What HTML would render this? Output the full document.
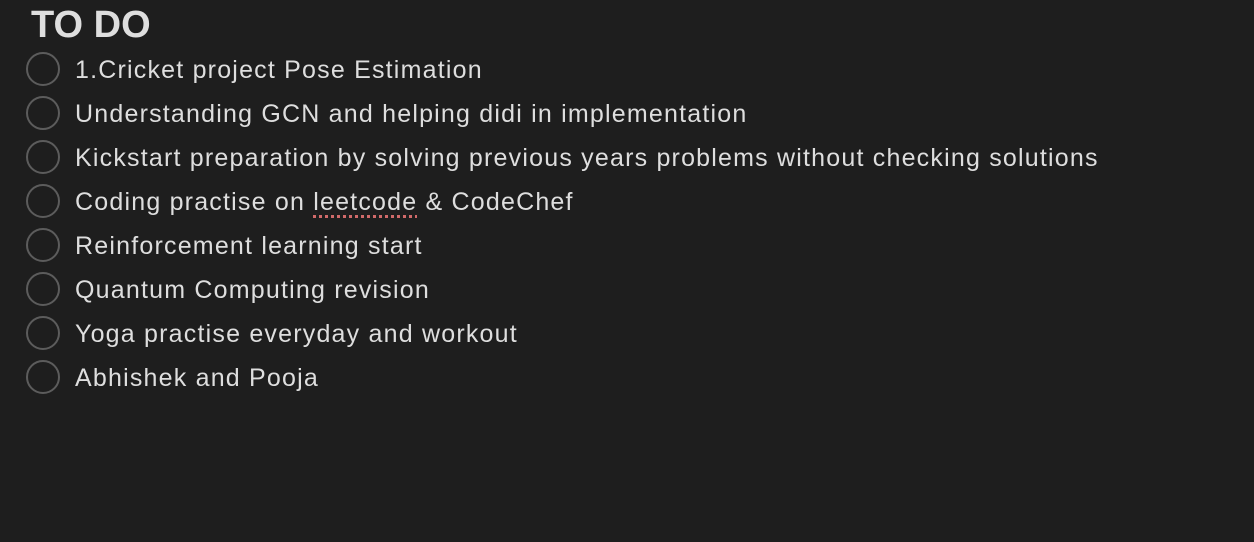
<!DOCTYPE html>
<html><head><meta charset="utf-8"><style>
body{margin:0;width:1254px;height:542px;background:#1e1e1e;overflow:hidden;font-family:"Liberation Sans",sans-serif;color:#dedede}
h1{position:absolute;left:31px;top:4px;margin:0;font-size:38px;font-weight:bold;letter-spacing:0px;line-height:42px}
.row{position:absolute;left:0;height:44px;width:1254px}
.c{position:absolute;left:26px;top:-17px;width:30px;height:30px;border:2px solid #5c5c5c;border-radius:50%}
.t{position:absolute;left:75px;top:-14px;font-size:25px;line-height:30px;letter-spacing:1.2px;white-space:nowrap}
.sp{text-decoration:underline dotted #d06a6a 3px;text-underline-offset:5px}
</style></head><body>
<h1>TO DO</h1>
<div class="row" style="top:69px"><div class="c"></div><div class="t">1.Cricket project Pose Estimation</div></div>
<div class="row" style="top:113px"><div class="c"></div><div class="t">Understanding GCN and helping didi in implementation</div></div>
<div class="row" style="top:157px"><div class="c"></div><div class="t">Kickstart preparation by solving previous years problems without checking solutions</div></div>
<div class="row" style="top:201px"><div class="c"></div><div class="t">Coding practise on <span class="sp">leetcode</span> &amp; CodeChef</div></div>
<div class="row" style="top:245px"><div class="c"></div><div class="t">Reinforcement learning start</div></div>
<div class="row" style="top:289px"><div class="c"></div><div class="t">Quantum Computing revision</div></div>
<div class="row" style="top:333px"><div class="c"></div><div class="t">Yoga practise everyday and workout</div></div>
<div class="row" style="top:377px"><div class="c"></div><div class="t">Abhishek and Pooja</div></div>
</body></html>
